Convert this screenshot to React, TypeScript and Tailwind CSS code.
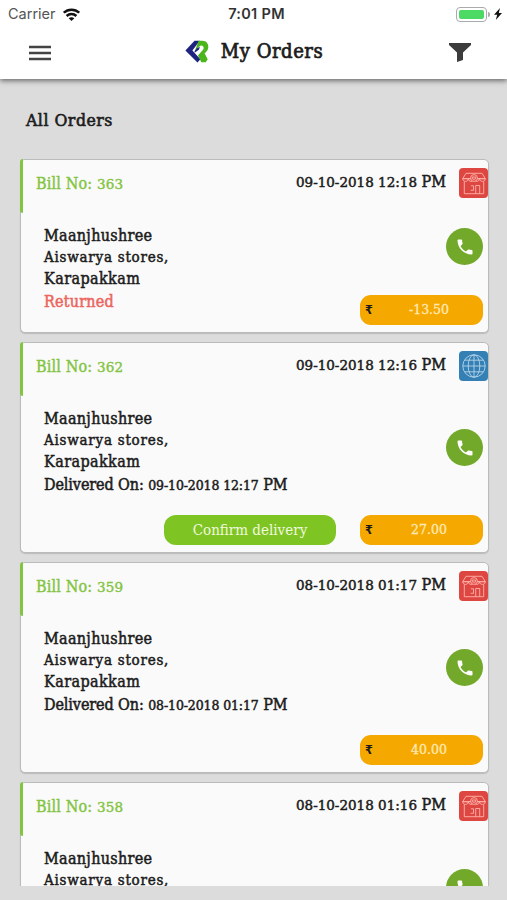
import clsx from "clsx";

interface Order {
    id: number;
    date: string;
    source: "store" | "web";
    address: string[];
    status?: string;
    delivered?: string;
    confirm?: boolean;
    amount?: string;
}

const orders: Order[] = [
    {
        id: 363,
        date: "09-10-2018 12:18",
        source: "store",
        address: ["Maanjhushree", "Aiswarya stores,", "Karapakkam"],
        status: "Returned",
        amount: "-13.50",
    },
    {
        id: 362,
        date: "09-10-2018 12:16",
        source: "web",
        address: ["Maanjhushree", "Aiswarya stores,", "Karapakkam"],
        delivered: "09-10-2018 12:17",
        confirm: true,
        amount: "27.00",
    },
    {
        id: 359,
        date: "08-10-2018 01:17",
        source: "store",
        address: ["Maanjhushree", "Aiswarya stores,", "Karapakkam"],
        delivered: "08-10-2018 01:17",
        amount: "40.00",
    },
    {
        id: 358,
        date: "08-10-2018 01:16",
        source: "store",
        address: ["Maanjhushree", "Aiswarya stores,"],
    },
];

function StatusBar() {
    return (
        <div className="flex h-[28px] items-center justify-between pl-2 pr-[5px] font-['Inter','Roboto',sans-serif] text-[#333]">
            <div className="flex w-[160px] items-center gap-[7px]">
                <span className="text-[14.5px] text-[#555]">Carrier</span>
                <svg width="17" height="13" viewBox="0 0 17 13" fill="none" stroke="#111" strokeWidth="2.5">
                    <path d="M.8 4.7C5 .6 12 .6 16.2 4.7" />
                    <path d="M3.6 8c2.8-2.6 7-2.6 9.8 0" />
                    <path d="M8.5 13 5.7 10.3c1.6-1.4 4-1.4 5.6 0z" fill="#111" stroke="none" />
                </svg>
            </div>
            <span className="ml-[3px] text-[14.5px] font-semibold tracking-[0.3px]">7:01 PM</span>
            <div className="flex w-[160px] items-center justify-end">
                <div className="h-[15px] w-[31px] rounded-[4px] border border-[#aaa] p-[2px]">
                    <div className="h-full rounded-[2px] bg-[#4cd964]" />
                </div>
                <div className="ml-px h-[5px] w-[2px] rounded-r bg-[#aaa]" />
                <svg className="ml-1" width="8" height="12" viewBox="0 0 8 12" fill="#111">
                    <path d="M6 0 0 6.8h3.2L1.8 12 8 4.9H4.8z" />
                </svg>
            </div>
        </div>
    );
}

function Logo() {
    return (
        <svg width="24" height="23" viewBox="0 0 24 23">
            <path d="M9.5.8h5.3L7.4 10.6l8 8.6-2.9 3.3L.4 10.6z" fill="#1f2380" />
            <path d="M13.6.8h3.9c4.6 0 6.9 4.6 5.3 8.6-.6 1.5-1.8 2.8-3.2 3.9l3.1 6-1.9 2.9h-4.5l-3.3-6.7 3.2-3.8c2.2-1.8 3-3.6 2-5.2-1-1.4-2.7-1.1-4.1.3l-4 3.8z" fill="#4bb51c" />
            <path d="m9.6 10.9 2.2-2.7 3.2-1.1-1.2 2.6-4.2 3z" fill="#1f2380" />
        </svg>
    );
}

function SourceIcon({ source }: { source: Order["source"] }) {
    if (source === "web") {
        return (
            <svg width="29" height="30" viewBox="0 0 29 30" fill="none" stroke="#b5d5ea" strokeWidth="0.9">
                <rect width="29" height="30" rx="4" fill="#347fb4" stroke="none" />
                <circle cx="15" cy="15" r="11.2" />
                <ellipse cx="15" cy="15" rx="5.8" ry="11.2" />
                <path d="M15 3.8v22.4M3.8 15h22.4M5.5 9.2h19M5.5 20.8h19" />
            </svg>
        );
    }
    return (
        <svg width="29" height="30" viewBox="0 0 29 30" fill="none" stroke="#ffb3ad" strokeWidth="0.9">
            <rect width="29" height="30" rx="4" fill="#de4741" stroke="none" />
            <path d="M7 5.3h16l3.3 5.4H3.7zM5.3 13.5v12.2h19.4V13.5" />
            <path d="M3.7 10.7c0 3.6 5.6 3.6 5.6 0 0 3.6 5.6 3.6 5.6 0 0 3.6 5.6 3.6 5.6 0 0 3.6 5.8 3.6 5.8 0z" />
            <circle cx="15" cy="10" r="3.4" fill="#de4741" />
            <path d="M13.2 9h3.6l-.6 2.2h-2.4zM16.7 25.7v-8.2h4v8.2M12 17.8h2.5v4.5h-2.8" />
        </svg>
    );
}

function CallButton() {
    return (
        <button className="flex size-[37px] items-center justify-center rounded-full bg-[#73a92b]">
            <svg width="20" height="20" viewBox="0 0 24 24" fill="#fff">
                <path d="M6.62 10.79c1.44 2.83 3.76 5.14 6.59 6.59l2.2-2.2c.27-.27.67-.36 1.02-.24 1.12.37 2.33.57 3.57.57.55 0 1 .45 1 1V20c0 .55-.45 1-1 1C10.61 21 3 13.39 3 4c0-.55.45-1 1-1h3.5c.55 0 1 .45 1 1 0 1.25.2 2.45.57 3.57.11.35.03.74-.25 1.02z" />
            </svg>
        </button>
    );
}

function OrderCard({ order }: { order: Order }) {
    const [name, street, city] = order.address;

    return (
        <article
            className={clsx(
                "relative flex shrink-0 flex-col rounded-[5px] border border-[#b9bbbd] bg-[#fafafa] shadow-[0_1px_1px_#bbb]",
                order.status ? "h-[174px]" : "h-[211px]"
            )}
        >
            <div className="absolute -left-px -top-px h-[54px] w-[3px] rounded-l-[3px] bg-[#83c441]" />
            <header className="flex h-[54px] shrink-0 items-start justify-between pl-[15px]">
                <h2 className="mt-[13px] text-[16px] leading-[22px] tracking-[0.15px] text-[#83c441] [-webkit-text-stroke:0.4px]">
                    Bill No: <span className="font-['DejaVu_Serif',serif] text-[13.5px]">{order.id}</span>
                </h2>
                <div className="flex">
                    <time className="mt-[11px] mr-[13px] text-[16px] leading-[22px] [-webkit-text-stroke:0.5px]">
                        <span className="font-['DejaVu_Serif',serif] text-[13.5px]">{order.date}</span> PM
                    </time>
                    <div className="mt-[8px]">
                        <SourceIcon source={order.source} />
                    </div>
                </div>
            </header>
            <div className="flex flex-1 items-start justify-between pl-[23px] pr-[5px]">
                <div className="pt-[11px] text-[16px] leading-[22px] tracking-[0.3px] [-webkit-text-stroke:0.5px]">
                    <p>{name}</p>
                    <p className="text-[15px] leading-[21px] tracking-[0.75px]">{street}</p>
                    {city && <p className="tracking-[0.4px]">{city}</p>}
                    {order.status && <p className="leading-[23px] tracking-[0.2px] text-[#eb6660]">{order.status}</p>}
                    {order.delivered && (
                        <p className="leading-[23px] tracking-[-0.1px]">
                            Delivered On:{" "}
                            <span className="font-['DejaVu_Serif',serif] text-[12.5px]">{order.delivered}</span> PM
                        </p>
                    )}
                </div>
                <div className={order.status ? "mt-[14px]" : "mt-[32px]"}>
                    <CallButton />
                </div>
            </div>
            {order.amount && (
                <footer className="-mt-[24px] mb-[7px] flex h-[30px] shrink-0 justify-end gap-[24px] pr-[5px]">
                    {order.confirm && (
                        <button className="w-[172px] rounded-[12px] bg-[#7ec524] text-[15px] text-[#f1f8df]">
                            Confirm delivery
                        </button>
                    )}
                    <div className="flex w-[123px] items-center rounded-[11px] bg-[#f5a800] pl-[5px]">
                        <span className="w-[10px] font-['DejaVu_Sans_Condensed','DejaVu_Sans',sans-serif] text-[12.5px] font-bold text-[#1c1c1c]">₹</span>
                        <span className="flex-1 text-center font-['DejaVu_Serif',serif] text-[12.5px] text-[#ffe8b5] [-webkit-text-stroke:0.3px]">
                            {order.amount}
                        </span>
                    </div>
                </footer>
            )}
        </article>
    );
}

function App() {
    return (
        <div className="flex h-[900px] w-[507px] flex-col overflow-hidden bg-[#dcdcdc] font-['DejaVu_Serif_Condensed','DejaVu_Serif',serif] text-[#1c1c1c]">
            <div className="z-10 h-[79px] shrink-0 bg-white shadow-[0_2px_5px_rgba(0,0,0,0.5)]">
                <StatusBar />
                <nav className="flex h-[47px] items-center justify-between pl-[29px] pr-[36px]">
                    <svg className="mt-[2px]" width="22" height="16" viewBox="0 0 22 16" stroke="#444" strokeWidth="2.4">
                        <path d="M0 2h22M0 8h22M0 14h22" />
                    </svg>
                    <div className="ml-[8px] flex items-center gap-[12px]">
                        <Logo />
                        <h1 className="-mt-[2px] text-[20px] leading-[26px] tracking-[0.55px] [-webkit-text-stroke:0.7px]">My Orders</h1>
                    </div>
                    <svg className="mt-px" width="22" height="19" viewBox="0 0 22 20" preserveAspectRatio="none" fill="#3c3c3c">
                        <path d="M0 0h22v2l-8 8v8l-6 2V10L0 2z" />
                    </svg>
                </nav>
            </div>
            <h2 className="mt-[29px] ml-[26px] h-[51px] shrink-0 text-[17.5px] leading-[24px] tracking-[0.5px] [-webkit-text-stroke:0.6px]">All Orders</h2>
            <main className="flex h-[727px] shrink-0 flex-col gap-[9px] overflow-hidden pl-[20px] pr-[18px]">
                {orders.map((order) => (
                    <OrderCard key={order.id} order={order} />
                ))}
            </main>
        </div>
    );
}

export default App;
